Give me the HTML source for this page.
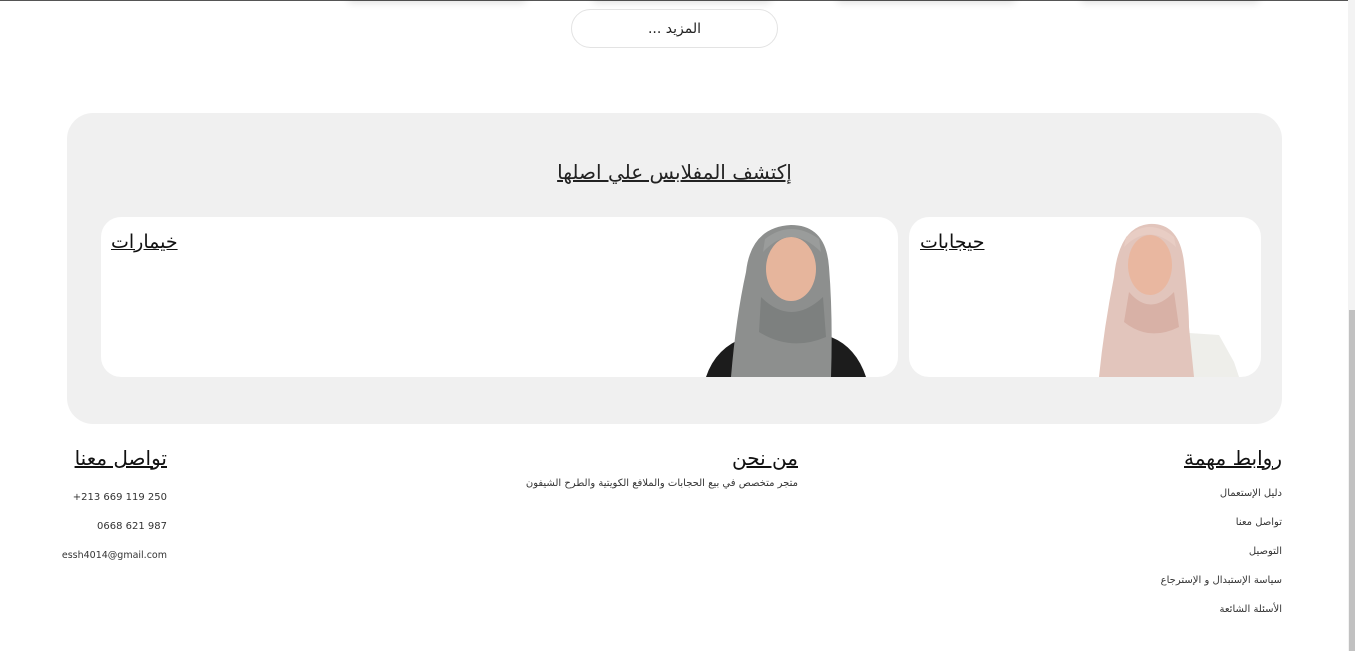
<!DOCTYPE html>
<html lang="ar" dir="rtl"><head><meta charset="utf-8">
<style>
*{margin:0;padding:0;box-sizing:border-box}
html,body{width:1355px;height:651px;overflow:hidden;background:#fff;font-family:"DejaVu Sans","Liberation Sans",sans-serif;color:#222}
.abs{position:absolute}
.top{left:0;top:0;width:1355px;height:1px;background:#555}
.shadow{top:-12px;height:12px;width:180px;border-radius:10px;box-shadow:0 3px 8px rgba(0,0,0,.12);background:#fff}
.more{left:571px;top:9px;width:207px;height:39px;border:1px solid #e3e3e3;border-radius:20px;text-align:center;line-height:38px;font-size:14px;color:#222}
.panel{left:67px;top:113px;width:1215px;height:311px;background:#f0f0f0;border-radius:26px}
.title{left:0;top:160px;width:1349px;text-align:center;font-size:20px}
.title span{text-decoration:underline}
.card{background:#fff;border-radius:20px;overflow:hidden;height:160px;top:217px}
.card .lbl{position:absolute;top:14px;font-size:19px;text-decoration:underline;color:#111}
.scroll{left:1348px;top:0;width:7px;height:651px;background:#f3f3f3}
.thumb{left:1349px;top:310px;width:6px;height:341px;background:#c1c1c1}
h3{font-weight:normal;font-size:20px;text-decoration:underline;color:#111}
.col p{font-size:10px;color:#333;line-height:12px}
</style></head><body>
<div class="abs top"></div>
<div class="abs shadow" style="left:347px"></div>
<div class="abs shadow" style="left:592px"></div>
<div class="abs shadow" style="left:836px"></div>
<div class="abs shadow" style="left:1080px"></div>
<div class="abs more">المزيد ...</div>

<div class="abs panel"></div>
<div class="abs title"><span>إكتشف المفلابس علي اصلها</span></div>

<div class="abs card" style="left:909px;width:352px">
  <div class="lbl" style="left:11px">حيجابات</div>
  <svg class="abs" style="left:185px;top:0" width="150" height="160" viewBox="0 0 150 160">
    <path d="M70 160 L80 115 L125 118 L140 145 L145 160Z" fill="#eeeeea"/>
    <path d="M5 160 Q10 110 20 60 Q25 10 55 7 Q85 5 90 45 Q95 90 95 110 L100 160Z" fill="#e2c5bc"/>
    <ellipse cx="56" cy="48" rx="22" ry="30" fill="#e9b7a0"/>
    <path d="M30 30 Q55 5 82 30 L80 20 Q55 0 32 20Z" fill="#e8cdc4"/>
    <path d="M35 75 Q56 100 80 75 L85 110 Q55 125 30 105Z" fill="#d8b1a6"/>
  </svg>
</div>

<div class="abs card" style="left:101px;width:797px">
  <div class="lbl" style="left:10px">خيمارات</div>
  <svg class="abs" style="left:600px;top:0" width="170" height="160" viewBox="0 0 170 160">
    <path d="M5 160 Q15 130 45 120 L130 120 Q155 130 165 160Z" fill="#1c1c1c"/>
    <path d="M30 160 Q35 100 45 55 Q50 10 90 8 Q125 8 128 50 Q132 100 130 160Z" fill="#8d8f8e"/>
    <ellipse cx="90" cy="52" rx="25" ry="32" fill="#e6b59c"/>
    <path d="M62 35 Q90 5 120 35 L118 22 Q90 2 64 22Z" fill="#9a9c9b"/>
    <path d="M60 80 Q90 110 122 80 L125 120 Q90 135 58 115Z" fill="#7d807f"/>
  </svg>
</div>

<div class="abs col" style="right:73px;top:446px;text-align:right">
  <h3>روابط مهمة</h3>
  <p style="margin-top:18px">دليل الإستعمال</p>
  <p style="margin-top:17px">تواصل معنا</p>
  <p style="margin-top:17px">التوصيل</p>
  <p style="margin-top:17px">سياسة الإستبدال و الإسترجاع</p>
  <p style="margin-top:17px">الأسئلة الشائعة</p>
</div>
<div class="abs col" style="right:557px;top:446px;text-align:right">
  <h3>من نحن</h3>
  <p style="margin-top:8px">متجر متخصص في بيع الحجابات والملافع الكويتية والطرح الشيفون</p>
</div>
<div class="abs col" style="right:1188px;top:446px;text-align:right">
  <h3>تواصل معنا</h3>
  <p style="margin-top:22px;direction:ltr">+213 669 119 250</p>
  <p style="margin-top:17px;direction:ltr">0668 621 987</p>
  <p style="margin-top:17px;direction:ltr;font-size:9.5px">essh4014@gmail.com</p>
</div>

<div class="abs scroll"></div>
<div class="abs thumb"></div>
</body></html>
